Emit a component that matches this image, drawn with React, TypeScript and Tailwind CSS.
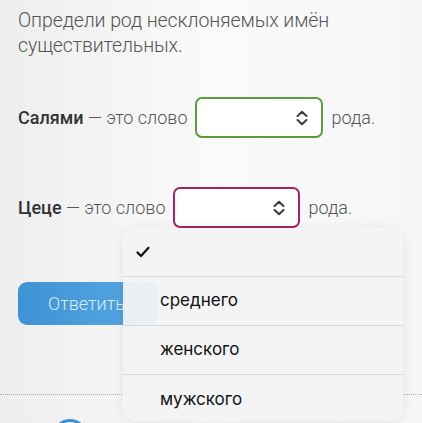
import React from 'react';

const Chevrons: React.FC = () => (
  <svg width="14" height="16" viewBox="0 0 14 16" fill="none" stroke="#3a3a3a" strokeWidth="2" strokeLinecap="round" strokeLinejoin="round">
    <path d="M2.5 6 L7 1.8 L11.5 6" />
    <path d="M2.5 10 L7 14.2 L11.5 10" />
  </svg>
);

const Select: React.FC<{ width: string; color: string }> = ({ width, color }) => (
  <div className={`${width} ${color} h-[41px] border-2 rounded-[7px] bg-white flex items-center justify-end pr-[12px]`}>
    <Chevrons />
  </div>
);

export default function App() {
  const options = ['среднего', 'женского', 'мужского'];

  return (
    <div className="relative w-[422px] h-[423px] overflow-hidden bg-gradient-to-r from-[#eeeeee] via-[#fafafa] to-[#f6f6f6] font-['Roboto',sans-serif] font-light text-[#555]">
      <div className="px-[18px] pt-[8px]">
        <p className="text-[19.5px] leading-[25px] tracking-[-0.1px]">
          Определи род несклоняемых имён существительных.
        </p>

        {/* Questions */}
        <div className="mt-[39px] flex items-center gap-[8px] text-[18px]">
          <span><b className="font-medium text-[#333]">Салями</b> — это слово</span>
          <Select width="w-[128px]" color="border-[#5c9d3b]" />
          <span>рода.</span>
        </div>

        <div className="mt-[49px] flex items-center gap-[8px] text-[18px]">
          <span><b className="font-medium text-[#333]">Цеце</b> — это слово</span>
          <Select width="w-[127px]" color="border-[#a9255f]" />
          <span>рода.</span>
        </div>

        <button className="mt-[54px] h-[43px] w-[140px] rounded-[9px] bg-gradient-to-r from-[#3e93d6] to-[#58a8e2] pl-[30px] text-left text-[18px] font-light text-[#d8eeff]">
          Ответить
        </button>
      </div>

      <div className="mt-[69px] border-t border-dotted border-[#9db3c4]" />

      <div className="ml-[52px] mt-[24px] h-[36px] w-[36px] rounded-full border-[3px] border-[#3b8fd0]" />

      {/* Picker overlay */}
      <div className="absolute left-[123px] top-[228px] w-[280px] h-[193px] rounded-[13px] bg-[#f3f3f3]/95 shadow-[0_2px_14px_rgba(0,0,0,0.08)] font-['Inter',sans-serif] font-normal text-[17px] text-[#111] overflow-hidden">
        <div className="h-[49px] flex items-center pl-[13px] border-b border-[#d6d6d6]">
          <svg width="14" height="12" viewBox="0 0 14 12" fill="none" stroke="#111" strokeWidth="2.2" strokeLinecap="round" strokeLinejoin="round">
            <path d="M1.5 6.5 L5 10 L12.5 1.8" />
          </svg>
        </div>
        {options.map((o, i) => (
          <div key={o} className={`h-[49px] flex items-center pl-[37px] ${i < options.length - 1 ? 'border-b border-[#d6d6d6]' : ''}`}>
            {o}
          </div>
        ))}
      </div>
    </div>
  );
}
